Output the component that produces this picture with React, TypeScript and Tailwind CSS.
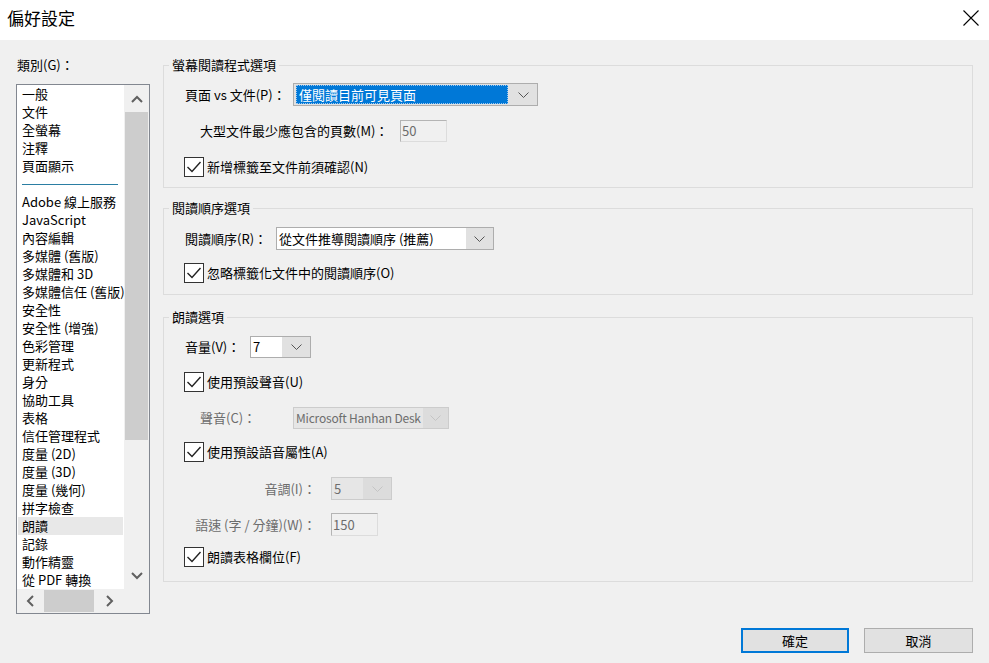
import React from 'react'
import clsx from 'clsx'

const CATEGORIES_TOP = ['一般', '文件', '全螢幕', '注釋', '頁面顯示']
const CATEGORIES = [
  'Adobe 線上服務',
  'JavaScript',
  '內容編輯',
  '多媒體 (舊版)',
  '多媒體和 3D',
  '多媒體信任 (舊版)',
  '安全性',
  '安全性 (增強)',
  '色彩管理',
  '更新程式',
  '身分',
  '協助工具',
  '表格',
  '信任管理程式',
  '度量 (2D)',
  '度量 (3D)',
  '度量 (幾何)',
  '拼字檢查',
  '朗讀',
  '記錄',
  '動作精靈',
  '從 PDF 轉換',
]

function Chevron({ disabled }: { disabled?: boolean }) {
  return (
    <svg width="11" height="6" viewBox="0 0 11 6">
      <path d="M0.5 0.5 L5.5 5.5 L10.5 0.5" fill="none" stroke={disabled ? '#c4c4c4' : '#555'} strokeWidth="1" />
    </svg>
  )
}

function ScrollArrow({ dir }: { dir: 'up' | 'down' | 'left' | 'right' }) {
  const d = {
    up: 'M1 7 L6 2 L11 7',
    down: 'M1 2 L6 7 L11 2',
    left: 'M8 1 L3 6 L8 11',
    right: 'M3 1 L8 6 L3 11',
  }[dir]
  const vertical = dir === 'up' || dir === 'down'
  return (
    <svg width={vertical ? 12 : 11} height={vertical ? 9 : 12} viewBox={vertical ? '0 0 12 9' : '0 0 11 12'}>
      <path d={d} fill="none" stroke="#606060" strokeWidth="2" />
    </svg>
  )
}

function Checkbox({ label }: { label: string }) {
  return (
    <div className="flex items-center -ml-[1px]">
      <div className="w-[20px] h-[20px] border border-[#333] bg-white flex items-center justify-center">
        <svg width="16" height="14" viewBox="0 0 16 14">
          <path d="M1.5 7 L6 11.5 L14.5 2" fill="none" stroke="#222" strokeWidth="1.4" />
        </svg>
      </div>
      <span className="ml-[3px] leading-[18px]">{label}</span>
    </div>
  )
}

function Select({
  value,
  width,
  height = 23,
  selected,
  disabled,
  textWidth,
  textClass,
}: {
  value: string
  width: number
  height?: number
  selected?: boolean
  disabled?: boolean
  textWidth?: number
  textClass?: string
}) {
  return (
    <div
      className={clsx(
        'flex border',
        disabled ? 'border-[#cccccc] bg-[#dcdcdc]' : 'border-[#adadad] bg-[#e1e1e1]',
      )}
      style={{ width, height }}
    >
      {selected ? (
        <div className="flex-1 p-[1px] pl-[2px]">
          <div className="h-full bg-[#0078d7] border border-dotted border-[#9cc8f0] text-white flex items-center pl-[2px] leading-[18px]">
            {value}
          </div>
        </div>
      ) : (
        <div
          className={clsx(
            'flex items-center pl-[2px] overflow-hidden whitespace-nowrap leading-[18px]',
            disabled ? 'bg-[#e6e6e6] text-[#6d6d6d]' : 'bg-white text-black',
            textClass,
          )}
          style={{ width: textWidth }}
        >
          {value}
        </div>
      )}
      <div className={clsx('flex items-center justify-center', selected ? 'w-[28px]' : 'flex-1')}>
        <Chevron disabled={disabled} />
      </div>
    </div>
  )
}

function DisabledInput({ value, width, height }: { value: string; width: number; height: number }) {
  return (
    <div
      className="border border-t-[#b4b4b4] border-l-[#b4b4b4] border-r-[#dcdcdc] border-b-[#dcdcdc] bg-[#f0f0f0] text-[#6d6d6d] flex items-center pl-[1px] leading-[18px]"
      style={{ width, height }}
    >
      {value}
    </div>
  )
}

function Group({ title, className, children }: { title: string; className?: string; children: React.ReactNode }) {
  return (
    <div className={clsx('border border-[#dcdcdc] pl-[21px]', className)}>
      <div className="-mt-[10px] -ml-[16px] px-[3px] w-fit bg-[#f0f0f0] leading-[18px]">{title}</div>
      {children}
    </div>
  )
}

export default function App() {
  return (
    <div className="w-[989px] h-[663px] overflow-hidden bg-[#f0f0f0] text-[13px] text-black flex flex-col font-['Noto_Sans_CJK_TC',sans-serif]">
      {/* Title bar */}
      <div className="h-[40px] shrink-0 bg-white flex items-center justify-between pl-[7px] pr-[10px] pb-[5px]">
        <span className="text-[17px] leading-[20px]">偏好設定</span>
        <svg width="16" height="16" viewBox="0 0 16 16">
          <path d="M0.5 0.5 L15.5 15.5 M15.5 0.5 L0.5 15.5" stroke="#000" strokeWidth="1.1" />
        </svg>
      </div>

      <div className="flex flex-1">
        {/* Category list */}
        <div className="w-[163px] shrink-0 pl-[16px] pt-[16px] flex flex-col">
          <div className="leading-[18px] pl-[1px]">類別(G)：</div>
          <div className="mt-[10px] w-[134px] h-[530px] border border-[#828790] bg-white flex flex-col">
            <div className="flex flex-1 min-h-0">
              <div className="flex-1 overflow-hidden">
                {CATEGORIES_TOP.map(c => (
                  <div key={c} className="h-[18px] leading-[18px] pl-[5px] whitespace-nowrap">{c}</div>
                ))}
                <div className="h-[18px] pt-[9px] pl-[5px] pr-[6px]">
                  <div className="h-[1px] bg-[#2b7ea3]" />
                </div>
                {CATEGORIES.map(c => (
                  <div
                    key={c}
                    className={clsx(
                      'h-[18px] leading-[18px] pl-[4px] ml-[1px] mr-[1px] whitespace-nowrap',
                      c === '朗讀' && 'bg-[#e8e8e8]',
                    )}
                  >
                    {c}
                  </div>
                ))}
              </div>
              <div className="w-[25px] bg-[#f0f0f0] flex flex-col">
                <div className="h-[27px] flex items-center justify-center pt-[2px]">
                  <ScrollArrow dir="up" />
                </div>
                <div className="h-[328px] mx-[1px] bg-[#cdcdcd]" />
                <div className="flex-1" />
                <div className="h-[27px] flex items-center justify-center">
                  <ScrollArrow dir="down" />
                </div>
              </div>
            </div>
            <div className="h-[24px] flex shrink-0">
              <div className="flex-1 bg-[#f0f0f0] flex items-center">
                <div className="w-[27px] flex justify-center">
                  <ScrollArrow dir="left" />
                </div>
                <div className="w-[50px] h-[22px] bg-[#cdcdcd]" />
                <div className="flex-1 flex justify-center">
                  <ScrollArrow dir="right" />
                </div>
              </div>
              <div className="w-[25px] bg-[#f0f0f0]" />
            </div>
          </div>
        </div>

        {/* Options */}
        <div className="w-[810px] pt-[25px] flex flex-col">
          <Group title="螢幕閱讀程式選項" className="pb-[10px]">
            <div className="mt-[9px] flex items-center">
              <span className="w-[108px] leading-[18px]">頁面 vs 文件(P)：</span>
              <Select value="僅閱讀目前可見頁面" width={245} selected />
            </div>
            <div className="mt-[14px] flex items-center pl-[15px]">
              <span className="w-[200px] leading-[18px]">大型文件最少應包含的頁數(M)：</span>
              <DisabledInput value="50" width={47} height={22} />
            </div>
            <div className="mt-[15px]">
              <Checkbox label="新增標籤至文件前須確認(N)" />
            </div>
          </Group>

          <Group title="閱讀順序選項" className="mt-[20px] pb-[11px]">
            <div className="mt-[10px] flex items-center">
              <span className="w-[91px] leading-[18px]">閱讀順序(R)：</span>
              <Select value="從文件推導閱讀順序 (推薦)" width={218} textWidth={189} />
            </div>
            <div className="mt-[13px]">
              <Checkbox label="忽略標籤化文件中的閱讀順序(O)" />
            </div>
          </Group>

          <Group title="朗讀選項" className="mt-[22px] pb-[14px]">
            <div className="mt-[10px] flex items-center">
              <span className="w-[65px] leading-[18px]">音量(V)：</span>
              <Select value="7" width={61} height={22} textWidth={31} />
            </div>
            <div className="mt-[14px]">
              <Checkbox label="使用預設聲音(U)" />
            </div>
            <div className="mt-[15px] flex items-center pl-[15px]">
              <span className="w-[93px] leading-[18px] text-[#6d6d6d]">聲音(C)：</span>
              <Select
                value="Microsoft Hanhan Desk"
                width={156}
                height={22}
                textWidth={129}
                textClass="text-[12px] tracking-[-0.2px]"
                disabled
              />
            </div>
            <div className="mt-[13px]">
              <Checkbox label="使用預設語音屬性(A)" />
            </div>
            <div className="mt-[15px] flex items-center">
              <span className="w-[146px] pr-[15px] text-right leading-[18px] text-[#6d6d6d]">音調(I)：</span>
              <Select value="5" width={61} height={23} textWidth={31} disabled />
            </div>
            <div className="mt-[13px] flex items-center">
              <span className="w-[146px] pr-[15px] text-right leading-[18px] text-[#6d6d6d]">語速 (字 / 分鐘)(W)：</span>
              <DisabledInput value="150" width={47} height={23} />
            </div>
            <div className="mt-[11px]">
              <Checkbox label="朗讀表格欄位(F)" />
            </div>
          </Group>

          {/* Buttons */}
          <div className="mt-auto pb-[10px] flex justify-end gap-[15px]">
            <button className="w-[108px] h-[25px] border-2 border-[#0078d7] bg-[#e1e1e1] leading-[18px]">確定</button>
            <button className="w-[109px] h-[25px] border border-[#adadad] bg-[#e1e1e1] leading-[18px]">取消</button>
          </div>
        </div>
      </div>
    </div>
  )
}
